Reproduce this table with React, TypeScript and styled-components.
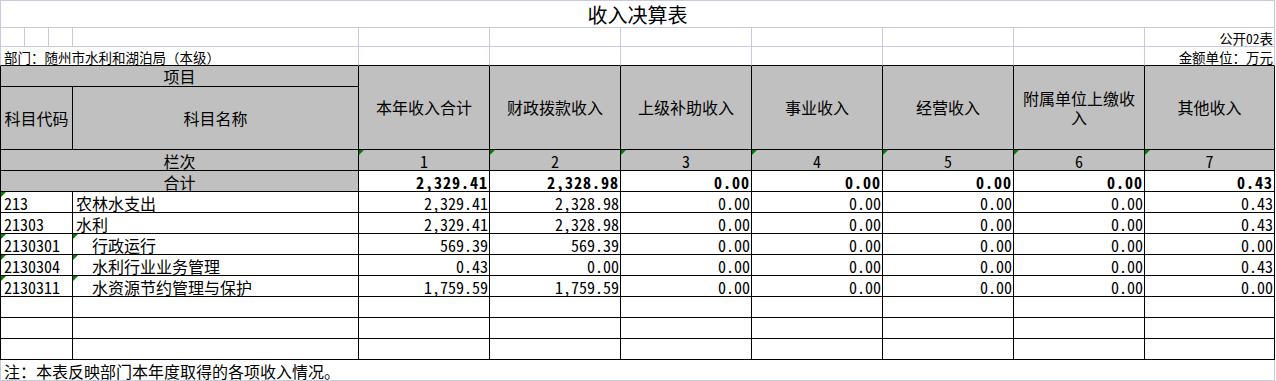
import { FC } from 'react'
import styled, { createGlobalStyle, css } from 'styled-components'

const FONT = '"Noto Sans Mono CJK SC", "Noto Sans CJK SC", "DejaVu Sans Mono", monospace'
const GRID = '#c6cbde'
const INK = '#000'

const GlobalStyle = createGlobalStyle`
  html, body { margin: 0; padding: 0; background: #fff; }
  body { font-family: ${FONT}; color: #000; }
  * { box-sizing: border-box; }
`

const Sheet = styled.table`
  border-collapse: separate;
  border-spacing: 0;
  table-layout: fixed;
  width: 1275px;
  font-family: ${FONT};
`

const Row = styled.tr<{ $h: number }>`
  height: ${p => p.$h}px;
`

// one spreadsheet cell; $ink = black rules, otherwise the light sheet grid
const Cell = styled.td<{ $ink?: boolean; $first?: boolean; $inkBottom?: boolean; $mark?: boolean }>`
  position: relative;
  padding: 0 2px;
  white-space: nowrap;
  overflow: hidden;
  border-right: 1px solid ${p => (p.$ink ? INK : GRID)};
  border-bottom: 1px solid ${p => (p.$ink || p.$inkBottom ? INK : GRID)};
  ${p => p.$first && css`border-left: 1px solid ${p.$ink ? INK : GRID};`}
  ${p =>
    p.$mark &&
    css`
      &::before {
        content: '';
        position: absolute;
        left: 0;
        top: 0;
        border-top: 5px solid #008000;
        border-right: 5px solid transparent;
      }
    `}
`

const TitleCell = styled(Cell)`
  border-top: 1px solid ${GRID};
  text-align: center;
  vertical-align: middle;
  font-size: 20px;
  font-weight: 300;
  line-height: 24px;
  padding-top: 1px;
`

const NoteCell = styled(Cell)<{ $right?: boolean }>`
  font-size: 13.5px;
  line-height: 16px;
  vertical-align: bottom;
  text-align: ${p => (p.$right ? 'right' : 'left')};
  padding: 0 1px 0 3px;
`

const HeadCell = styled(Cell)`
  background: #c0c0c0;
  text-align: center;
  vertical-align: middle;
  font-size: 16px;
  line-height: 19px;
  white-space: normal;
  padding: 0 2px;
`

const IndexCell = styled(HeadCell)`
  line-height: 18px;
  padding-top: 1px;
`

const CodeCell = styled(Cell)`
  font-size: 16px;
  line-height: 18px;
  vertical-align: middle;
  padding: 1px 2px 0 3px;
`

const NameCell = styled(CodeCell)<{ $indent?: number }>`
  padding-left: ${p => 3 + (p.$indent || 0) * 16}px;
`

const NumCell = styled(Cell)<{ $bold?: boolean }>`
  font-size: 16px;
  line-height: 18px;
  text-align: right;
  vertical-align: middle;
  padding: 1px 1px 0 2px;
  ${p =>
    p.$bold &&
    css`
      font-weight: 700;
      letter-spacing: 1px;
    `}
`

const FootCell = styled(Cell)`
  font-size: 16px;
  line-height: 18px;
  vertical-align: middle;
  padding: 1px 2px 0 3px;
`

const cols = [25, 24, 24, 286, 131, 131, 131, 131, 131, 131, 130]

const heads = ['本年收入合计', '财政拨款收入', '上级补助收入', '事业收入', '经营收入', '附属单位上缴收入', '其他收入']

const total = ['2,329.41', '2,328.98', '0.00', '0.00', '0.00', '0.00', '0.43']

type Item = { code: string; name: string; level: number; codeMark: boolean; nameMark: boolean; vals: string[] }

const items: Item[] = [
  { code: '213', name: '农林水支出', level: 0, codeMark: true, nameMark: false, vals: total },
  { code: '21303', name: '水利', level: 0, codeMark: false, nameMark: false, vals: total },
  { code: '2130301', name: '行政运行', level: 1, codeMark: true, nameMark: true, vals: ['569.39', '569.39', '0.00', '0.00', '0.00', '0.00', '0.00'] },
  { code: '2130304', name: '水利行业业务管理', level: 1, codeMark: true, nameMark: true, vals: ['0.43', '0.00', '0.00', '0.00', '0.00', '0.00', '0.43'] },
  { code: '2130311', name: '水资源节约管理与保护', level: 1, codeMark: true, nameMark: true, vals: ['1,759.59', '1,759.59', '0.00', '0.00', '0.00', '0.00', '0.00'] },
]

const App: FC = () => {
  return (
    <>
      <GlobalStyle />
      <Sheet>
        <colgroup>
          {cols.map((w, i) => (
            <col key={i} style={{ width: w }} />
          ))}
        </colgroup>
        <tbody>
          <Row $h={28}>
            <TitleCell colSpan={11} $first>收入决算表</TitleCell>
          </Row>
          <Row $h={19}>
            <NoteCell $first />
            <NoteCell />
            <NoteCell />
            <NoteCell />
            {heads.slice(0, 6).map((_, i) => (
              <NoteCell key={i} />
            ))}
            <NoteCell $right>公开02表</NoteCell>
          </Row>
          <Row $h={19}>
            <NoteCell colSpan={4} $first $inkBottom>部门：随州市水利和湖泊局（本级）</NoteCell>
            {heads.slice(0, 6).map((_, i) => (
              <NoteCell key={i} $inkBottom />
            ))}
            <NoteCell $right $inkBottom>金额单位：万元</NoteCell>
          </Row>
          <Row $h={21}>
            <HeadCell colSpan={4} $ink $first>项目</HeadCell>
            {heads.map(h => (
              <HeadCell key={h} rowSpan={2} $ink>{h}</HeadCell>
            ))}
          </Row>
          <Row $h={63}>
            <HeadCell colSpan={3} $ink $first>科目代码</HeadCell>
            <HeadCell $ink>科目名称</HeadCell>
          </Row>
          <Row $h={21}>
            <IndexCell colSpan={4} $ink $first>栏次</IndexCell>
            {heads.map((h, i) => (
              <IndexCell key={h} $ink $mark>{i + 1}</IndexCell>
            ))}
          </Row>
          <Row $h={21}>
            <IndexCell colSpan={4} $ink $first>合计</IndexCell>
            {total.map((v, i) => (
              <NumCell key={i} $ink $bold>{v}</NumCell>
            ))}
          </Row>
          {items.map(it => (
            <Row $h={21} key={it.code}>
              <CodeCell colSpan={3} $ink $first $mark={it.codeMark}>{it.code}</CodeCell>
              <NameCell $ink $indent={it.level} $mark={it.nameMark}>{it.name}</NameCell>
              {it.vals.map((v, i) => (
                <NumCell key={i} $ink>{v}</NumCell>
              ))}
            </Row>
          ))}
          {[0, 1, 2].map(r => (
            <Row $h={21} key={'blank' + r}>
              <CodeCell colSpan={3} $ink $first />
              <NameCell $ink />
              {heads.map(h => (
                <NumCell key={h} $ink />
              ))}
            </Row>
          ))}
          <Row $h={21}>
            <FootCell colSpan={11} $first>注：本表反映部门本年度取得的各项收入情况。</FootCell>
          </Row>
        </tbody>
      </Sheet>
    </>
  )
}

export default App
